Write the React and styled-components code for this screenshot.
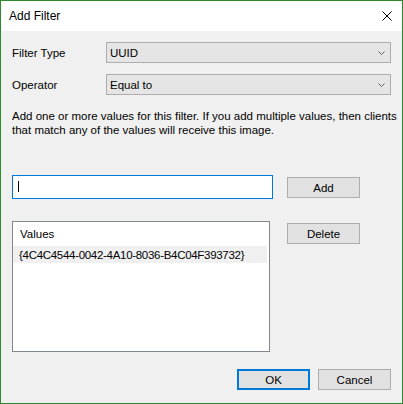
import React from 'react';
import styled, { createGlobalStyle } from 'styled-components';

const GlobalStyle = createGlobalStyle`
  html, body {
    margin: 0;
    padding: 0;
    background: #ffffff;
  }
`;

const Chevron = () => (
  <svg width="7" height="4" viewBox="0 0 7 4">
    <path d="M0.5 0.5 L3.5 3.5 L6.5 0.5" fill="none" stroke="#606060" strokeWidth="1" />
  </svg>
);

const CloseIcon = () => (
  <svg width="10" height="10" viewBox="0 0 10 10">
    <path d="M0.5 0.5 L9.5 9.5 M9.5 0.5 L0.5 9.5" stroke="#000" strokeWidth="1" />
  </svg>
);

const AddFilterDialog = () => {
  return (
    <Window>
      <TitleBar>
        <Title>Add Filter</Title>
        <CloseIcon />
      </TitleBar>
      <Body>
        <FieldGrid>
          <Label>Filter Type</Label>
          <Combo>
            <span>UUID</span>
            <Chevron />
          </Combo>
          <Label>Operator</Label>
          <Combo>
            <span>Equal to</span>
            <Chevron />
          </Combo>
        </FieldGrid>
        <Description>
          Add one or more values for this filter. If you add multiple values, then clients
          <br />
          that match any of the values will receive this image.
        </Description>
        <EntryRow>
          <TextBox>
            <Caret />
          </TextBox>
          <Button $top={2}>Add</Button>
        </EntryRow>
        <ListRow>
          <ListBox>
            <ListHeader>Values</ListHeader>
            <ListItem>{'{4C4C4544-0042-4A10-8036-B4C04F393732}'}</ListItem>
          </ListBox>
          <Button $top={2}>Delete</Button>
        </ListRow>
        <Footer>
          <Button $primary>OK</Button>
          <Button>Cancel</Button>
        </Footer>
      </Body>
    </Window>
  );
};

const Window = styled.div`
  width: 403px;
  height: 404px;
  box-sizing: border-box;
  border: 1px solid #2b8a2b;
  background: #f0f0f0;
  display: flex;
  flex-direction: column;
  font-family: 'Liberation Sans', Arial, sans-serif;
  font-size: 11.5px;
  color: #000;
`;

const TitleBar = styled.div`
  height: 30px;
  flex: none;
  background: #fff;
  display: flex;
  align-items: center;
  justify-content: space-between;
  padding: 0 10px 1px 8px;
  box-sizing: border-box;
`;

const Title = styled.span`
  font-size: 12px;
`;

const Body = styled.div`
  flex: 1;
  padding: 11px;
  display: flex;
  flex-direction: column;
`;

const FieldGrid = styled.div`
  display: grid;
  grid-template-columns: 94px 1fr;
  grid-auto-rows: 21px;
  row-gap: 11px;
  align-items: center;
`;

const Label = styled.span``;

const Combo = styled.div`
  height: 21px;
  box-sizing: border-box;
  border: 1px solid #adadad;
  background: #e5e5e5;
  display: flex;
  align-items: center;
  justify-content: space-between;
  padding: 0 5px 0 3px;
`;

const Description = styled.p`
  margin: 14px 0 0;
  line-height: 14px;
  white-space: nowrap;
`;

const EntryRow = styled.div`
  display: flex;
  align-items: flex-start;
  gap: 14px;
  margin-top: 38px;
`;

const TextBox = styled.div`
  width: 261px;
  height: 24px;
  box-sizing: border-box;
  border: 1px solid #0078d7;
  background: #fff;
  padding: 5px 0 0 5px;
`;

const Caret = styled.div`
  width: 1px;
  height: 11px;
  background: #000;
`;

const Button = styled.div`
  width: 73px;
  height: 21px;
  box-sizing: border-box;
  margin-top: ${(p) => p.$top || 0}px;
  border: ${(p) => (p.$primary ? '2px solid #0078d7' : '1px solid #adadad')};
  background: #e1e1e1;
  display: flex;
  align-items: center;
  justify-content: center;
`;

const ListRow = styled.div`
  display: flex;
  align-items: flex-start;
  gap: 17px;
  margin-top: 22px;
`;

const ListBox = styled.div`
  width: 258px;
  height: 131px;
  box-sizing: border-box;
  border: 1px solid #828790;
  background: #fff;
  padding-right: 2px;
`;

const ListHeader = styled.div`
  height: 24px;
  display: flex;
  align-items: center;
  padding-left: 7px;
`;

const ListItem = styled.div`
  height: 17px;
  display: flex;
  align-items: center;
  padding-left: 6px;
  background: #f0f0f0;
  white-space: nowrap;
  letter-spacing: -0.3px;
`;

const Footer = styled.div`
  display: flex;
  justify-content: flex-end;
  gap: 8px;
  margin-top: 17px;
`;

export default function App() {
  return (
    <>
      <GlobalStyle />
      <AddFilterDialog />
    </>
  );
}
